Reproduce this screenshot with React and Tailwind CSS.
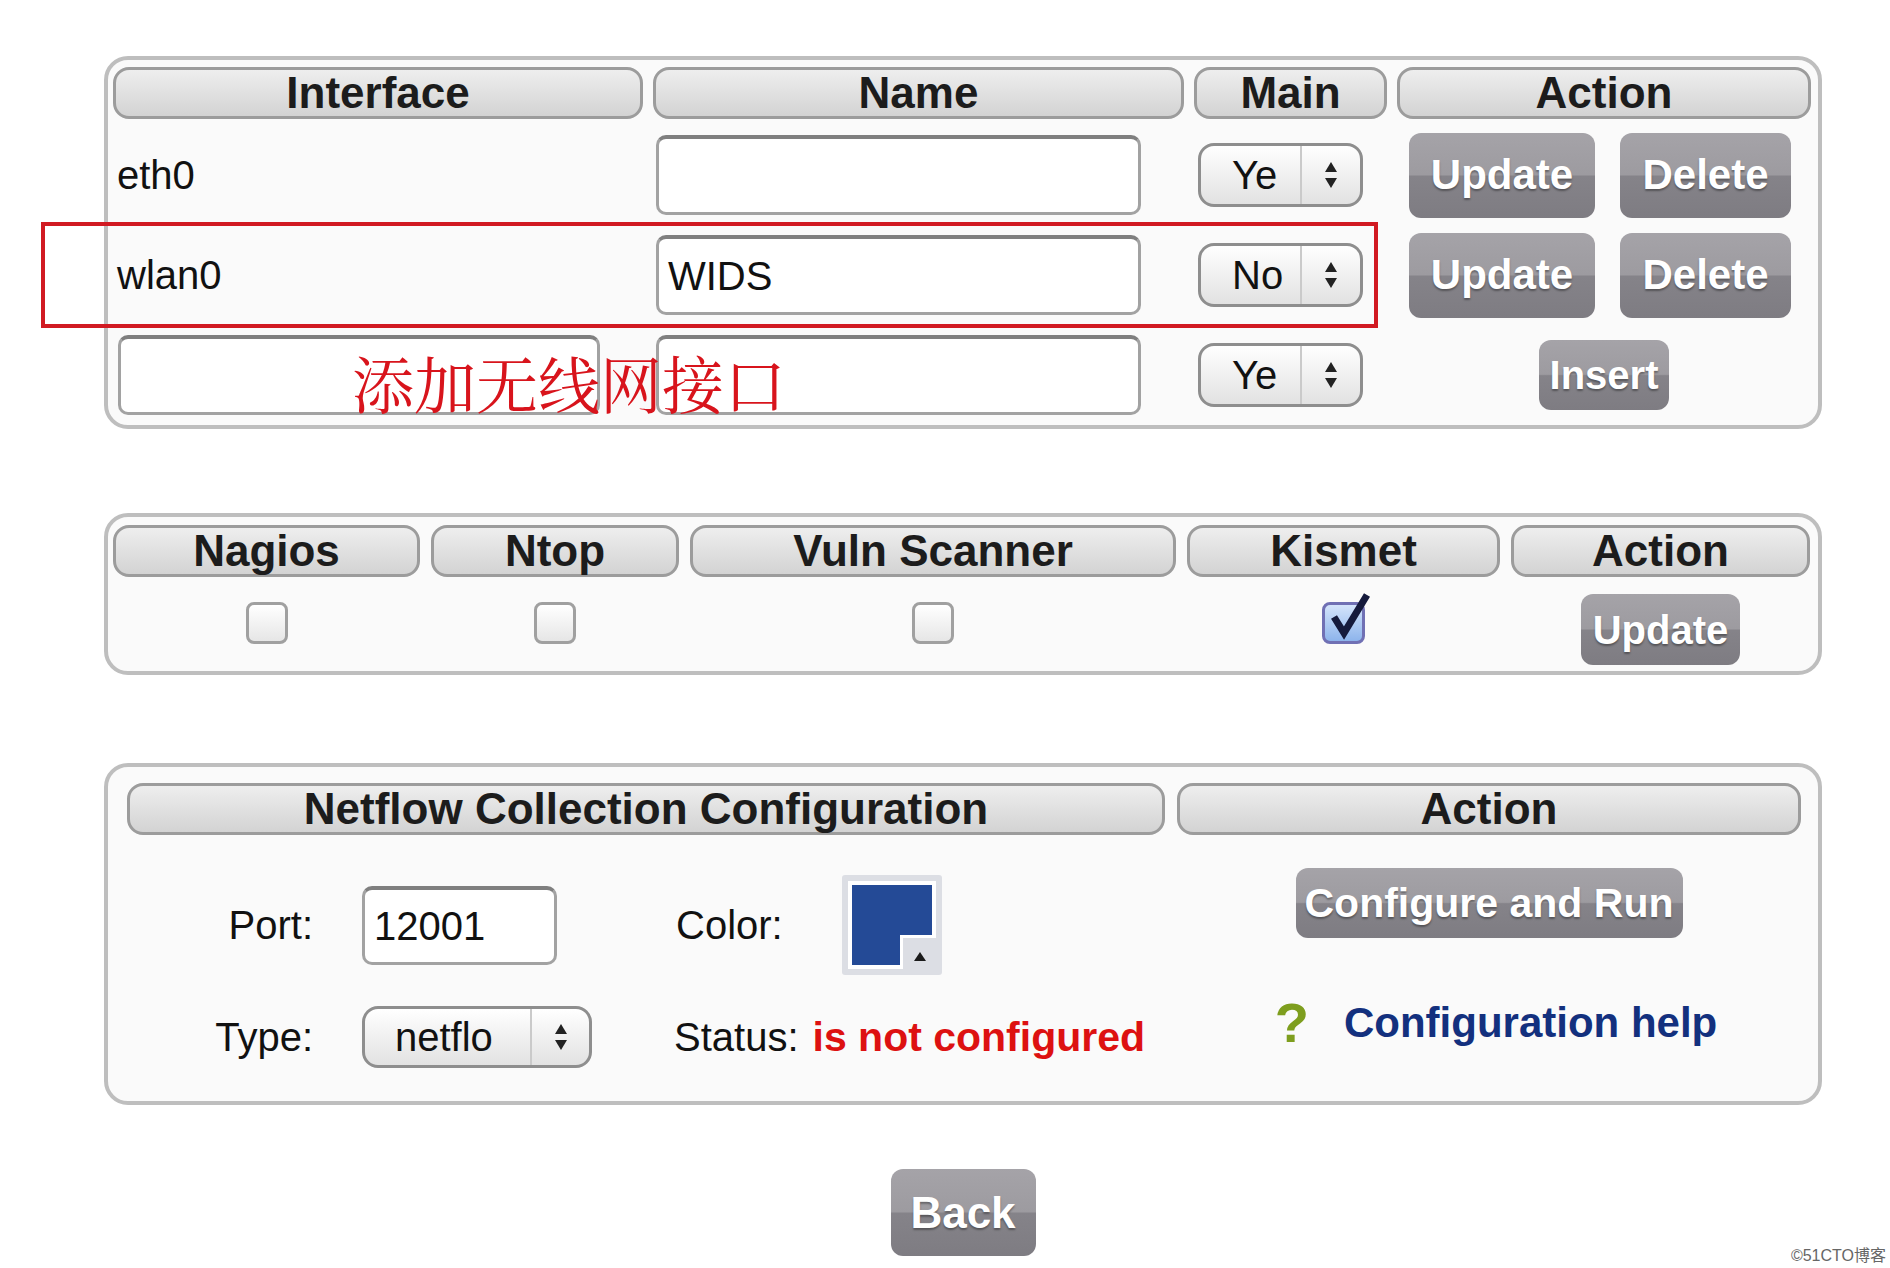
import React from "react";

const COLS1 = "grid grid-cols-[530px_531px_193px_414px] gap-x-[10px]";
const COLS2 = "grid grid-cols-[307px_248px_486px_313px_299px] gap-x-[11px]";
const COLS3 = "grid grid-cols-[1038px_624px] gap-x-[12px]";

const Head = ({ children, className = "" }) => (
  <div
    className={`flex h-[52px] items-center justify-center rounded-[16px] border-[3px] border-[#9c9c9c] bg-[linear-gradient(to_bottom,#eeeeee,#d3d3d3)] text-[44px] font-bold leading-none text-[#1c1c1c] ${className}`}
  >
    {children}
  </div>
);

const GrayButton = ({ children, className = "" }) => (
  <div
    className={`flex items-center justify-center rounded-[12px] bg-[linear-gradient(to_bottom,#a5a3a8_0%,#9d9ba0_49%,#858389_51%,#7e7c82_100%)] font-bold leading-none text-white [text-shadow:0_2px_2px_rgba(0,0,0,0.35)] ${className}`}
  >
    {children}
  </div>
);

const Arrows = () => (
  <svg width="14" height="26" viewBox="0 0 14 26">
    <polygon points="7,0 13,10 1,10" fill="#222" />
    <polygon points="1,16 13,16 7,26" fill="#222" />
  </svg>
);

// fake select: value + arrow cell
const Select = ({ value, className = "", padClass = "", arrowClass = "" }) => (
  <div
    className={`flex overflow-hidden rounded-[16px] border-[3px] border-[#8e8e8e] bg-[linear-gradient(to_bottom,#ffffff,#e2e2e2)] ${className}`}
  >
    <div className={`flex flex-1 items-center ${padClass}`}>
      <span className="whitespace-nowrap text-[40px] leading-none text-[#111]">{value}</span>
    </div>
    <div className={`flex items-center justify-center border-l-2 border-[#cacaca] ${arrowClass}`}>
      <Arrows />
    </div>
  </div>
);

const Input = ({ value = "", className = "" }) => (
  <div
    className={`flex items-center rounded-[10px] border-[3px] border-t-[4px] border-[#a2a2a2] border-t-[#7f7f7f] bg-white pl-[9px] text-[40px] leading-none text-[#111] ${className}`}
  >
    {value}
  </div>
);

const Check = ({ checked }) =>
  checked ? (
    <div className="relative h-[42px] w-[43px] rounded-[8px] border-[3px] border-[#7070b4] bg-[linear-gradient(to_bottom,#d4e4fb,#8db4ec)]">
      <svg className="absolute left-[-3px] top-[-13px]" width="52" height="56" viewBox="0 0 52 56">
        <polyline points="12,25 22,41 45,3" fill="none" stroke="#151a3c" strokeWidth="7" />
      </svg>
    </div>
  ) : (
    <div className="h-[42px] w-[42px] rounded-[8px] border-[3px] border-[#a0a0a0] bg-[linear-gradient(to_bottom,#ffffff,#e6e6e6)]" />
  );

const Swatch = () => (
  <div className="rounded-[3px] bg-[#dcdee4] p-[6px]">
    <div className="relative bg-white p-[4px]">
      <div className="h-[80px] w-[80px] bg-[#244a96]" />
      <div className="absolute bottom-0 right-0 flex h-[34px] w-[36px] items-end justify-center border-l-[3px] border-t-[3px] border-white bg-[#dcdee4] pb-[8px]">
        <svg width="14" height="9" viewBox="0 0 14 9">
          <polygon points="7,0 13,9 1,9" fill="#1a1a1a" />
        </svg>
      </div>
    </div>
  </div>
);

export default function App() {
  return (
    <div className="relative h-[1268px] w-[1890px] overflow-hidden bg-white pl-[104px] pt-[56px] font-['Liberation_Sans','Noto_Sans_CJK_SC',sans-serif] text-[#111]">
      {/* Interfaces */}
      <div className="w-[1718px] rounded-[24px] border-4 border-[#bebebe] bg-[#fafafa] pl-[5px] pt-[7px]">
        <div className={COLS1}>
          <Head>Interface</Head>
          <Head>Name</Head>
          <Head>Main</Head>
          <Head>Action</Head>
        </div>
        <div className={`${COLS1} mt-[6px] grid-rows-[100px_100px_100px] items-center`}>
          <div className="pl-[4px] text-[40px] leading-none">eth0</div>
          <Input className="ml-[3px] h-[80px] w-[485px]" />
          <Select value="Ye" className="ml-[4px] h-[64px] w-[165px]" padClass="pl-[31px]" arrowClass="w-[60px]" />
          <div className="flex justify-center gap-[25px] pr-[8px]">
            <GrayButton className="h-[85px] w-[186px] text-[42px]">Update</GrayButton>
            <GrayButton className="h-[85px] w-[171px] text-[42px]">Delete</GrayButton>
          </div>

          <div className="pl-[4px] text-[40px] leading-none">wlan0</div>
          <Input value="WIDS" className="ml-[3px] h-[80px] w-[485px]" />
          <Select value="No" className="ml-[4px] h-[64px] w-[165px]" padClass="pl-[31px]" arrowClass="w-[60px]" />
          <div className="flex justify-center gap-[25px] pr-[8px]">
            <GrayButton className="h-[85px] w-[186px] text-[42px]">Update</GrayButton>
            <GrayButton className="h-[85px] w-[171px] text-[42px]">Delete</GrayButton>
          </div>

          <Input className="ml-[5px] h-[80px] w-[482px]" />
          <Input className="ml-[3px] h-[80px] w-[485px]" />
          <Select value="Ye" className="ml-[4px] h-[64px] w-[165px]" padClass="pl-[31px]" arrowClass="w-[60px]" />
          <div className="flex justify-center">
            <GrayButton className="h-[70px] w-[130px] text-[40px]">Insert</GrayButton>
          </div>
        </div>
      </div>

      {/* Services */}
      <div className="mt-[84px] w-[1718px] rounded-[24px] border-4 border-[#bebebe] bg-[#fafafa] pb-[6px] pl-[5px] pt-[8px]">
        <div className={COLS2}>
          <Head>Nagios</Head>
          <Head>Ntop</Head>
          <Head>Vuln Scanner</Head>
          <Head>Kismet</Head>
          <Head>Action</Head>
        </div>
        <div className={`${COLS2} h-[88px] items-start justify-items-center`}>
          <div className="mt-[25px]"><Check /></div>
          <div className="mt-[25px]"><Check /></div>
          <div className="mt-[25px]"><Check /></div>
          <div className="mt-[25px]"><Check checked /></div>
          <GrayButton className="mt-[17px] h-[71px] w-[159px] text-[40px]">Update</GrayButton>
        </div>
      </div>

      {/* Netflow */}
      <div className="mt-[88px] w-[1718px] rounded-[24px] border-4 border-[#bebebe] bg-[#fafafa] pb-[14px] pl-[19px] pt-[16px]">
        <div className={COLS3}>
          <Head>Netflow Collection Configuration</Head>
          <Head>Action</Head>
        </div>
        <div className={COLS3}>
          <div className="pt-[40px]">
            <div className="flex h-[100px] items-center text-[40px] leading-none">
              <div className="w-[186px] text-right">Port:</div>
              <Input value="12001" className="ml-[49px] h-[79px] w-[195px]" />
              <div className="ml-[119px] w-[166px]">Color:</div>
              <Swatch />
            </div>
            <div className="mt-[12px] flex h-[100px] items-center text-[40px] leading-none">
              <div className="w-[186px] text-right">Type:</div>
              <Select value="netflo" className="ml-[49px] h-[62px] w-[230px]" padClass="pl-[30px]" arrowClass="w-[59px]" />
              <div className="ml-[82px]">Status:</div>
              <div className="ml-[14px] text-[41px] font-bold text-[#dd1111]">is not configured</div>
            </div>
          </div>
          <div className="flex flex-col items-center pt-[33px]">
            <GrayButton className="h-[70px] w-[387px] text-[41px]">Configure and Run</GrayButton>
            <div className="mt-[58px] flex h-[54px] items-center gap-[35px] pl-[14px] leading-none">
              <span className="text-[56px] font-bold text-[#7e9e1e]">?</span>
              <span className="text-[42px] font-bold text-[#13307e]">Configuration help</span>
            </div>
          </div>
        </div>
      </div>

      <div className="w-[1718px]">
        <GrayButton className="mx-auto mt-[64px] h-[87px] w-[145px] text-[44px]">Back</GrayButton>
      </div>

      {/* annotation overlays */}
      <div className="absolute left-[41px] top-[222px] h-[106px] w-[1337px] border-4 border-[#d11a22]" />
      <div className="absolute left-[352px] top-[352px] font-['Noto_Serif_CJK_SC','Noto_Sans_CJK_SC',serif] text-[62px] leading-none text-[#d8141c]">
        添加无线网接口
      </div>
      <div className="absolute bottom-[4px] right-[4px] text-[16px] leading-none text-[#666]">©51CTO博客</div>
    </div>
  );
}
